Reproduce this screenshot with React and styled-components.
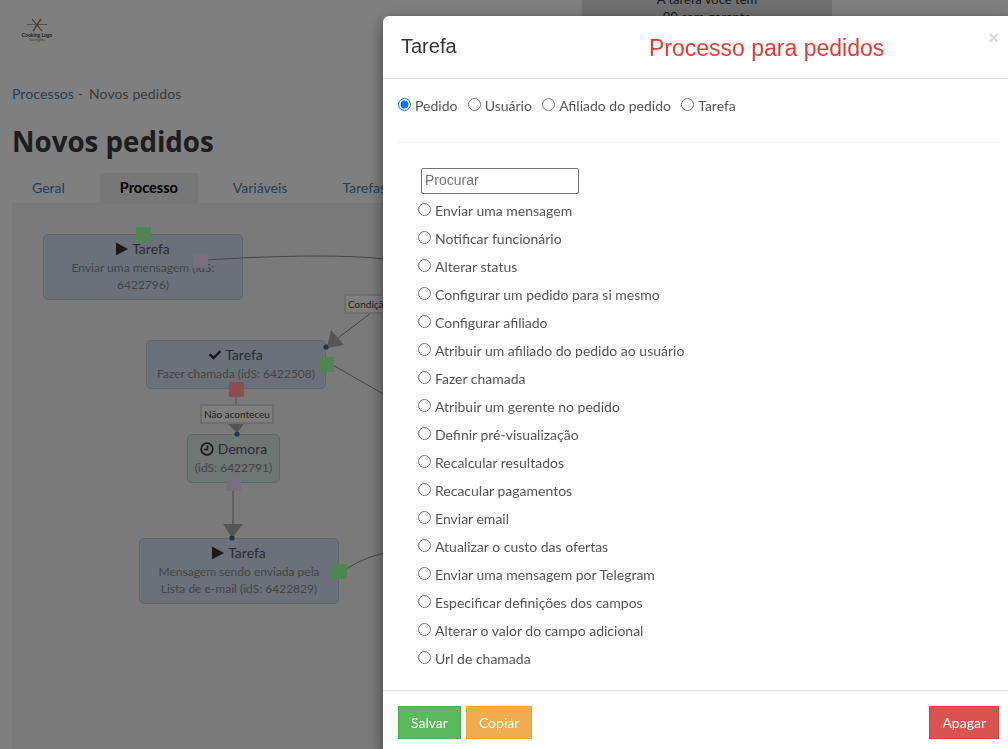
import React from "react"
import styled, { createGlobalStyle } from "styled-components"
import { FaCheck } from "react-icons/fa"

const bodyFont = `Lato, "Open Sans", sans-serif`
const headFont = `"Liberation Sans", Arial, sans-serif`

const GlobalStyle = createGlobalStyle`
  html, body {
    margin: 0;
    height: 100%;
    overflow: hidden;
    background: #fff;
    font-family: ${bodyFont};
  }
  * { box-sizing: border-box; }
`

const Page = styled.div`
  height: 100vh;
  padding: 0 0 0 12px;
  display: flex;
  flex-direction: column;
  overflow: hidden;
`

const Header = styled.header`
  height: 84px;
  flex: none;
  display: flex;
  align-items: flex-start;
`

const Logo = styled.div`
  margin: 18px 0 0 10px;
  width: 30px;
  display: flex;
  flex-direction: column;
  align-items: center;
`

const LogoName = styled.span`
  font-size: 5px;
  line-height: 6px;
  font-weight: 700;
  white-space: nowrap;
  color: #444;
`

const LogoTag = styled.span`
  font-size: 3px;
  line-height: 5px;
  white-space: nowrap;
  color: #8a6d2f;
`

const NoticePanel = styled.div`
  margin: -10px 0 0 530px;
  width: 250px;
  height: 60px;
  background: #dedede;
  text-align: center;
  font-size: 13px;
  line-height: 18px;
  color: #333;
`

const Crumbs = styled.nav`
  flex: none;
  font-size: 14px;
  letter-spacing: 0.1px;
  line-height: 20px;
  color: #777;
  display: flex;
  gap: 6px;
`

const CrumbLink = styled.a`
  color: #4a80b4;
`

const Title = styled.h1`
  flex: none;
  margin: 20px 0 15px;
  font-family: "Open Sans", ${bodyFont};
  font-size: 27.7px;
  line-height: 34px;
  font-weight: 700;
  color: #3a3a3a;
`

const Tabs = styled.div`
  flex: none;
  height: 31px;
  display: flex;
  gap: 15px;
  border-bottom: 1px solid #eee;
`

const Tab = styled.div`
  padding: 0 20px;
  height: 30px;
  font-size: ${({ $active }) => ($active ? 14.5 : 14)}px;
  line-height: 29px;
  border-radius: 2px 2px 0 0;
  white-space: nowrap;
  color: ${({ $active }) => ($active ? "#000" : "#4a80b4")};
  font-weight: ${({ $active }) => ($active ? 700 : 400)};
  background: ${({ $active }) => ($active ? "#eee" : "transparent")};
`

const Canvas = styled.div`
  position: relative;
  flex: 1;
  background: #f5f5f5;
`

const Edges = styled.svg`
  position: absolute;
  inset: 0;
  width: 100%;
  height: 100%;
  z-index: 2;
  pointer-events: none;
`

const Node = styled.div`
  position: absolute;
  left: ${({ $x }) => $x - 12}px;
  top: ${({ $y }) => $y - 204}px;
  width: ${({ $w }) => $w}px;
  height: ${({ $h }) => $h}px;
  padding: 4px 5px 0;
  border: 1px solid #c4c9cf;
  border-radius: 5px;
  background: ${({ $delay }) => ($delay ? "#dcece6" : "#d6e3f0")};
  text-align: center;
  z-index: 1;
`

const NodeTitle = styled.div`
  display: flex;
  align-items: center;
  justify-content: center;
  gap: 4px;
  font-size: 14px;
  line-height: 20px;
  color: #556;
`

const NodeIcon = styled.svg`
  width: ${({ $size }) => $size || 12}px;
  height: 14px;
  flex: none;
  color: #333;
`

const NodeText = styled.div`
  font-size: 12px;
  line-height: 17px;
  color: #888;
`

const portColors = {
  green: "#4e8752",
  grey: "rgba(120, 112, 125, 0.95)",
  red: "#8c4e4e",
}

const Port = styled.span`
  position: absolute;
  left: ${({ $x }) => $x - 12}px;
  top: ${({ $y }) => $y - 204}px;
  width: 15px;
  height: 15px;
  background: ${({ $tone }) => portColors[$tone]};
  z-index: 11;
`

const EdgeLabel = styled.span`
  position: absolute;
  left: ${({ $x }) => $x - 12}px;
  top: ${({ $y }) => $y - 204}px;
  padding: 0 2px;
  font-size: 10px;
  line-height: 16px;
  background: #fff;
  border: 2px solid #ddd;
  color: #444;
  white-space: nowrap;
  z-index: 3;
`

const Backdrop = styled.div`
  position: fixed;
  inset: 0;
  z-index: 10;
  background: rgba(0, 0, 0, 0.5);
`

const Modal = styled.div`
  position: fixed;
  z-index: 11;
  left: 383px;
  top: 16px;
  width: 631px;
  display: flex;
  flex-direction: column;
  background: #fff;
  border-radius: 6px;
  box-shadow: 0 5px 15px rgba(0, 0, 0, 0.5);
`

const ModalHeader = styled.div`
  position: relative;
  height: 63px;
  flex: none;
  padding: 0 18px;
  display: flex;
  align-items: center;
  border-bottom: 1px solid #e5e5e5;
`

const ModalTitle = styled.h4`
  margin: 0 0 2px;
  width: 248px;
  font-family: ${headFont};
  font-size: 20px;
  font-weight: 400;
  color: #333;
`

const ProcessName = styled.span`
  font-family: ${headFont};
  font-size: 23px;
  margin-top: 2px;
  color: #e53935;
`

const CloseButton = styled.span`
  position: absolute;
  right: 15px;
  top: 12px;
  font-family: "Liberation Sans", sans-serif;
  font-size: 18px;
  font-weight: 700;
  color: #d8d8d8;
`

const ModalBody = styled.div`
  padding: 17px 15px 17px;
`

const TypeRow = styled.div`
  height: 20px;
  display: flex;
  gap: 10.3px;
`

const RadioLabel = styled.label`
  height: 20px;
  display: inline-flex;
  align-items: center;
  gap: 4px;
  font-size: 14px;
  line-height: 20px;
  color: #555;
  white-space: nowrap;
`

const Radio = styled.input.attrs({ type: "radio" })`
  margin: 0 0 3px;
  width: 13px;
  height: 13px;
  flex: none;
`

const Divider = styled.hr`
  margin: 26px 0 25px;
  border: 0;
  border-top: 1px solid #eee;
`

const Search = styled.input`
  display: block;
  margin-left: 23px;
  width: 158px;
  height: 26px;
  padding: 0 3px 2px;
  border: 1px solid #767676;
  border-radius: 2px;
  font-family: "Liberation Sans", sans-serif;
  font-size: 14px;
`

const ActionList = styled.div`
  margin: 3px 0 0 20px;
  display: flex;
  flex-direction: column;
`

const ActionRow = styled.div`
  height: 28px;
  display: flex;
  align-items: center;
`

const ModalFooter = styled.div`
  flex: none;
  padding: 15px;
  display: flex;
  gap: 5px;
  border-top: 1px solid #e5e5e5;
`

const buttonColors = {
  save: ["#5cb85c", "#4cae4c"],
  copy: ["#f0ad4e", "#eea236"],
  remove: ["#d9534f", "#d43f3a"],
}

const Button = styled.button`
  height: 33px;
  padding: 0 12px;
  margin-left: ${({ $push }) => ($push ? "auto" : 0)};
  font-family: ${bodyFont};
  font-size: 14px;
  color: #fff;
  background: ${({ $kind }) => buttonColors[$kind][0]};
  border: 1px solid ${({ $kind }) => buttonColors[$kind][1]};
  border-radius: 0;
`

const actions = [
  "Enviar uma mensagem",
  "Notificar funcionário",
  "Alterar status",
  "Configurar um pedido para si mesmo",
  "Configurar afiliado",
  "Atribuir um afiliado do pedido ao usuário",
  "Fazer chamada",
  "Atribuir um gerente no pedido",
  "Definir pré-visualização",
  "Recalcular resultados",
  "Recacular pagamentos",
  "Enviar email",
  "Atualizar o custo das ofertas",
  "Enviar uma mensagem por Telegram",
  "Especificar definições dos campos",
  "Alterar o valor do campo adicional",
  "Url de chamada",
]

const PlayIcon = () => (
  <NodeIcon viewBox="0 0 12 14">
    <path d="M0 0.5 L12 7 L0 13.5 Z" fill="currentColor" />
  </NodeIcon>
)

const ClockIcon = () => (
  <NodeIcon $size={14} viewBox="0 0 14 14">
    <circle cx="7" cy="7" r="5.8" fill="none" stroke="currentColor" strokeWidth="1.7" />
    <path d="M7.6 3.4 V7.6 H4" fill="none" stroke="currentColor" strokeWidth="1.5" />
  </NodeIcon>
)

const Arrow = ({ points, dot }) => (
  <>
    <polygon points={points} fill="#aaa" />
    <circle cx={dot[0]} cy={dot[1]} r="2.6" fill="#4f6a88" />
  </>
)

const Graph = () => (
  <Canvas>
    <Node $x={43} $y={234} $w={200} $h={66}>
      <NodeTitle><PlayIcon />Tarefa</NodeTitle>
      <NodeText>Enviar uma mensagem (idS: 6422796)</NodeText>
    </Node>
    <Node $x={146} $y={340} $w={180} $h={49}>
      <NodeTitle><FaCheck size={12} color="#333" />Tarefa</NodeTitle>
      <NodeText>Fazer chamada (idS: 6422508)</NodeText>
    </Node>
    <Node $x={187} $y={434} $w={93} $h={49} $delay>
      <NodeTitle><ClockIcon />Demora</NodeTitle>
      <NodeText>(idS: 6422791)</NodeText>
    </Node>
    <Node $x={139} $y={538} $w={200} $h={66}>
      <NodeTitle><PlayIcon />Tarefa</NodeTitle>
      <NodeText>Mensagem sendo enviada pela Lista de e-mail (idS: 6422829)</NodeText>
    </Node>

    <Edges>
      <g transform="translate(-12 -204)" fill="none" stroke="#8c8c8c" strokeWidth="1">
        <path d="M205 260 C 270 256 340 254 385 259" />
        <path d="M331 364 L 385 395" />
        <path d="M371 313 L 334 341" />
        <path d="M236 397 V 405" />
        <path d="M233 488 V 530" />
        <path d="M343 571 C 355 563 370 556 385 553" />
        <g stroke="none">
          <Arrow points="331,330 344,345 327,348" dot={[326, 347]} />
          <Arrow points="228,424 244,424 237,433" dot={[237, 434]} />
          <Arrow points="223,524 243,524 232,538" dot={[232, 538]} />
        </g>
      </g>
    </Edges>

    <Port $tone="green" $x={136} $y={227} />
    <Port $tone="grey" $x={193} $y={253} />
    <Port $tone="green" $x={319} $y={357} />
    <Port $tone="red" $x={229} $y={382} />
    <Port $tone="grey" $x={226} $y={476} />
    <Port $tone="green" $x={332} $y={564} />
    <EdgeLabel $x={344} $y={294}>Condição</EdgeLabel>
    <EdgeLabel $x={200} $y={404}>Não aconteceu</EdgeLabel>
  </Canvas>
)

const App = () => (
  <>
    <GlobalStyle />
    <Page>
      <Header>
        <Logo>
          <svg width="22" height="14" viewBox="0 0 22 14">
            <path d="M1 6.5 H21" stroke="#666" strokeWidth="0.6" />
            <path d="M6 1 L16 13" stroke="#666" strokeWidth="1.1" />
            <path d="M15 1 L7 13" stroke="#a8844a" strokeWidth="1.6" />
          </svg>
          <LogoName>Cooking Logo</LogoName>
          <LogoTag>Your tagline</LogoTag>
        </Logo>
        <NoticePanel>
          A tarefa você tem
          <br />
          90 sem gerente
        </NoticePanel>
      </Header>
      <Crumbs>
        <span>
          <CrumbLink>Processos</CrumbLink> -
        </span>
        <span>Novos pedidos</span>
      </Crumbs>
      <Title>Novos pedidos</Title>
      <Tabs>
        <Tab>Geral</Tab>
        <Tab $active>Processo</Tab>
        <Tab>Variáveis</Tab>
        <Tab>Tarefas</Tab>
      </Tabs>
      <Graph />
    </Page>
    <Backdrop />
    <Modal>
      <ModalHeader>
        <ModalTitle>Tarefa</ModalTitle>
        <ProcessName>Processo para pedidos</ProcessName>
        <CloseButton>×</CloseButton>
      </ModalHeader>
      <ModalBody>
        <TypeRow>
          <RadioLabel><Radio name="type" defaultChecked />Pedido</RadioLabel>
          <RadioLabel><Radio name="type" />Usuário</RadioLabel>
          <RadioLabel><Radio name="type" />Afiliado do pedido</RadioLabel>
          <RadioLabel><Radio name="type" />Tarefa</RadioLabel>
        </TypeRow>
        <Divider />
        <Search placeholder="Procurar" />
        <ActionList>
          {actions.map(name => (
            <ActionRow key={name}>
              <RadioLabel><Radio name="action" />{name}</RadioLabel>
            </ActionRow>
          ))}
        </ActionList>
      </ModalBody>
      <ModalFooter>
        <Button $kind="save">Salvar</Button>
        <Button $kind="copy">Copiar</Button>
        <Button $kind="remove" $push>Apagar</Button>
      </ModalFooter>
    </Modal>
  </>
)

export default App
